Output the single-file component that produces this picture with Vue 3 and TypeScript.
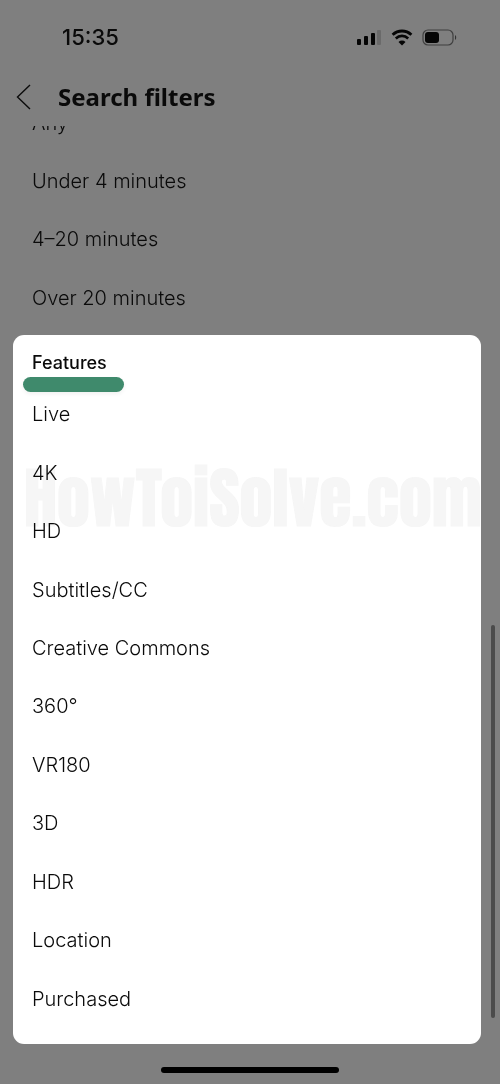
<script setup lang="ts">
const durations: string[] = ['Under 4 minutes', '4–20 minutes', 'Over 20 minutes']
const features: string[] = [
  'Live',
  '4K',
  'HD',
  'Subtitles/CC',
  'Creative Commons',
  '360°',
  'VR180',
  '3D',
  'HDR',
  'Location',
  'Purchased',
]
</script>

<template>
  <div class="screen">
    <div class="status">
      <span class="time">15:35</span>
      <div class="indicators">
        <svg width="26" height="16" viewBox="0 0 26 16" aria-hidden="true">
          <rect x="1" y="10" width="4" height="6" rx="1" />
          <rect x="8" y="7" width="4" height="9" rx="1" />
          <rect x="15" y="4" width="4" height="12" rx="1" />
          <rect x="21" y="1" width="4" height="15" rx="1" fill="#6a6a6a" />
        </svg>
        <svg width="22" height="17" viewBox="0 0 22 17" aria-hidden="true">
          <path d="M1.6 5.8C7 .7 15 .7 20.4 5.8" fill="none" stroke="#050505" stroke-width="2.8" />
          <path d="M4.8 9.4c3.6-3.3 8.8-3.3 12.4 0" fill="none" stroke="#050505" stroke-width="2.7" />
          <path d="M11 16.4 7.5 12.9c2-1.8 5-1.8 7 0z" />
        </svg>
        <svg width="36" height="17" viewBox="0 0 36 17" aria-hidden="true">
          <rect x="1" y="1" width="30" height="15" rx="5" fill="none" stroke="#3f3f3f" stroke-width="1.2" />
          <rect x="3" y="3" width="14" height="11" rx="3" />
          <path d="M33 6v5c1.6-.7 1.6-4.3 0-5z" fill="#333" />
        </svg>
      </div>
    </div>

    <header class="header">
      <button class="back" type="button" aria-label="Back">
        <svg width="15" height="26" viewBox="0 0 15 26" aria-hidden="true">
          <path d="M14 1 1.5 13 14 25" fill="none" stroke="#0c0c0c" stroke-width="1.4" />
        </svg>
      </button>
      <h1>Search filters</h1>
    </header>

    <main class="content">
      <section class="duration">
        <button class="row current" type="button">
          <span>Any</span>
          <svg width="13" height="8" viewBox="0 0 13 8" aria-hidden="true">
            <path d="M2 1.5 6.5 6 11 1.5" fill="none" stroke="#111" stroke-width="1.4" />
          </svg>
        </button>
        <ul class="list durations">
          <li v-for="item in durations" :key="item">
            <button class="row" type="button">{{ item }}</button>
          </li>
        </ul>
      </section>

      <section class="card">
        <h2>Features</h2>
        <div class="marker"></div>
        <ul class="list features">
          <li v-for="item in features" :key="item">
            <button class="row" type="button">{{ item }}</button>
          </li>
        </ul>
        <div class="watermark">HowToiSolve.com</div>
      </section>
    </main>

    <footer class="home"><span></span></footer>
    <div class="scrollbar"></div>
  </div>
</template>

<style>
body {
  margin: 0;
  background: #7f7f7f;
}
</style>

<style scoped>
.screen {
  position: relative;
  min-height: 100vh;
  background: #7f7f7f;
  color: #0a0a0a;
  font-family: Inter, "Liberation Sans", sans-serif;
}
.status {
  display: flex;
  align-items: center;
  justify-content: space-between;
  height: 74px;
  padding: 0 42px 0 62px;
}
.time {
  font-size: 22px;
  font-weight: 500;
  line-height: 24px;
}
.indicators {
  display: flex;
  align-items: center;
  gap: 9px;
}
.indicators svg {
  fill: #050505;
}
.header {
  display: flex;
  align-items: center;
  height: 45px;
  padding: 0 16px 7px;
}
.back {
  display: flex;
  width: 42px;
  padding: 0;
  border: 0;
  background: none;
}
h1 {
  margin: 0;
  font-family: "Noto Sans", "Open Sans", sans-serif;
  font-size: 24px;
  font-weight: 700;
  line-height: 32px;
}
.content {
  overflow: hidden;
}
.duration {
  margin-top: -33px;
  padding: 0 47px 8px 32px;
}
.list {
  display: grid;
  grid-auto-rows: 1fr;
  margin: 0;
  padding: 0;
  list-style: none;
}
.durations {
  min-height: 175px;
}
.features {
  min-height: 643px;
}
.list li {
  display: flex;
}
.row {
  display: flex;
  align-items: center;
  width: 100%;
  padding: 0;
  border: 0;
  background: none;
  color: inherit;
  font: 300 20px/24px Inter, "Liberation Sans", sans-serif;
  text-align: left;
}
.current {
  justify-content: space-between;
  height: 59px;
}
.card {
  position: relative;
  overflow: hidden;
  margin: 0 19px 0 13px;
  padding: 15px 19px 16px;
  border-radius: 11px;
  background: #fff;
}
h2 {
  margin: 0;
  font-size: 18px;
  font-weight: 500;
  line-height: 25px;
}
.marker {
  width: 101px;
  height: 15px;
  margin: 2px 0 -7px -9px;
  border-radius: 8px;
  background: #3f8a6c;
  box-shadow: 0 2px 4px #0000000f;
}
.watermark {
  position: absolute;
  top: 129px;
  left: 11px;
  color: #f6f6f6;
  font: 400 66px/68px Impact, Anton, "Liberation Sans", sans-serif;
  white-space: nowrap;
  mix-blend-mode: multiply;
  pointer-events: none;
  -webkit-text-stroke: 1px #f6f6f6;
}
.home {
  display: flex;
  justify-content: center;
  padding: 23px 0 10px;
}
.home span {
  width: 178px;
  height: 6px;
  border-radius: 3px;
  background: #000;
}
.scrollbar {
  position: absolute;
  right: 5px;
  bottom: 66px;
  width: 4px;
  height: 393px;
  border-radius: 2px;
  background: #4b4b4b;
}
</style>
